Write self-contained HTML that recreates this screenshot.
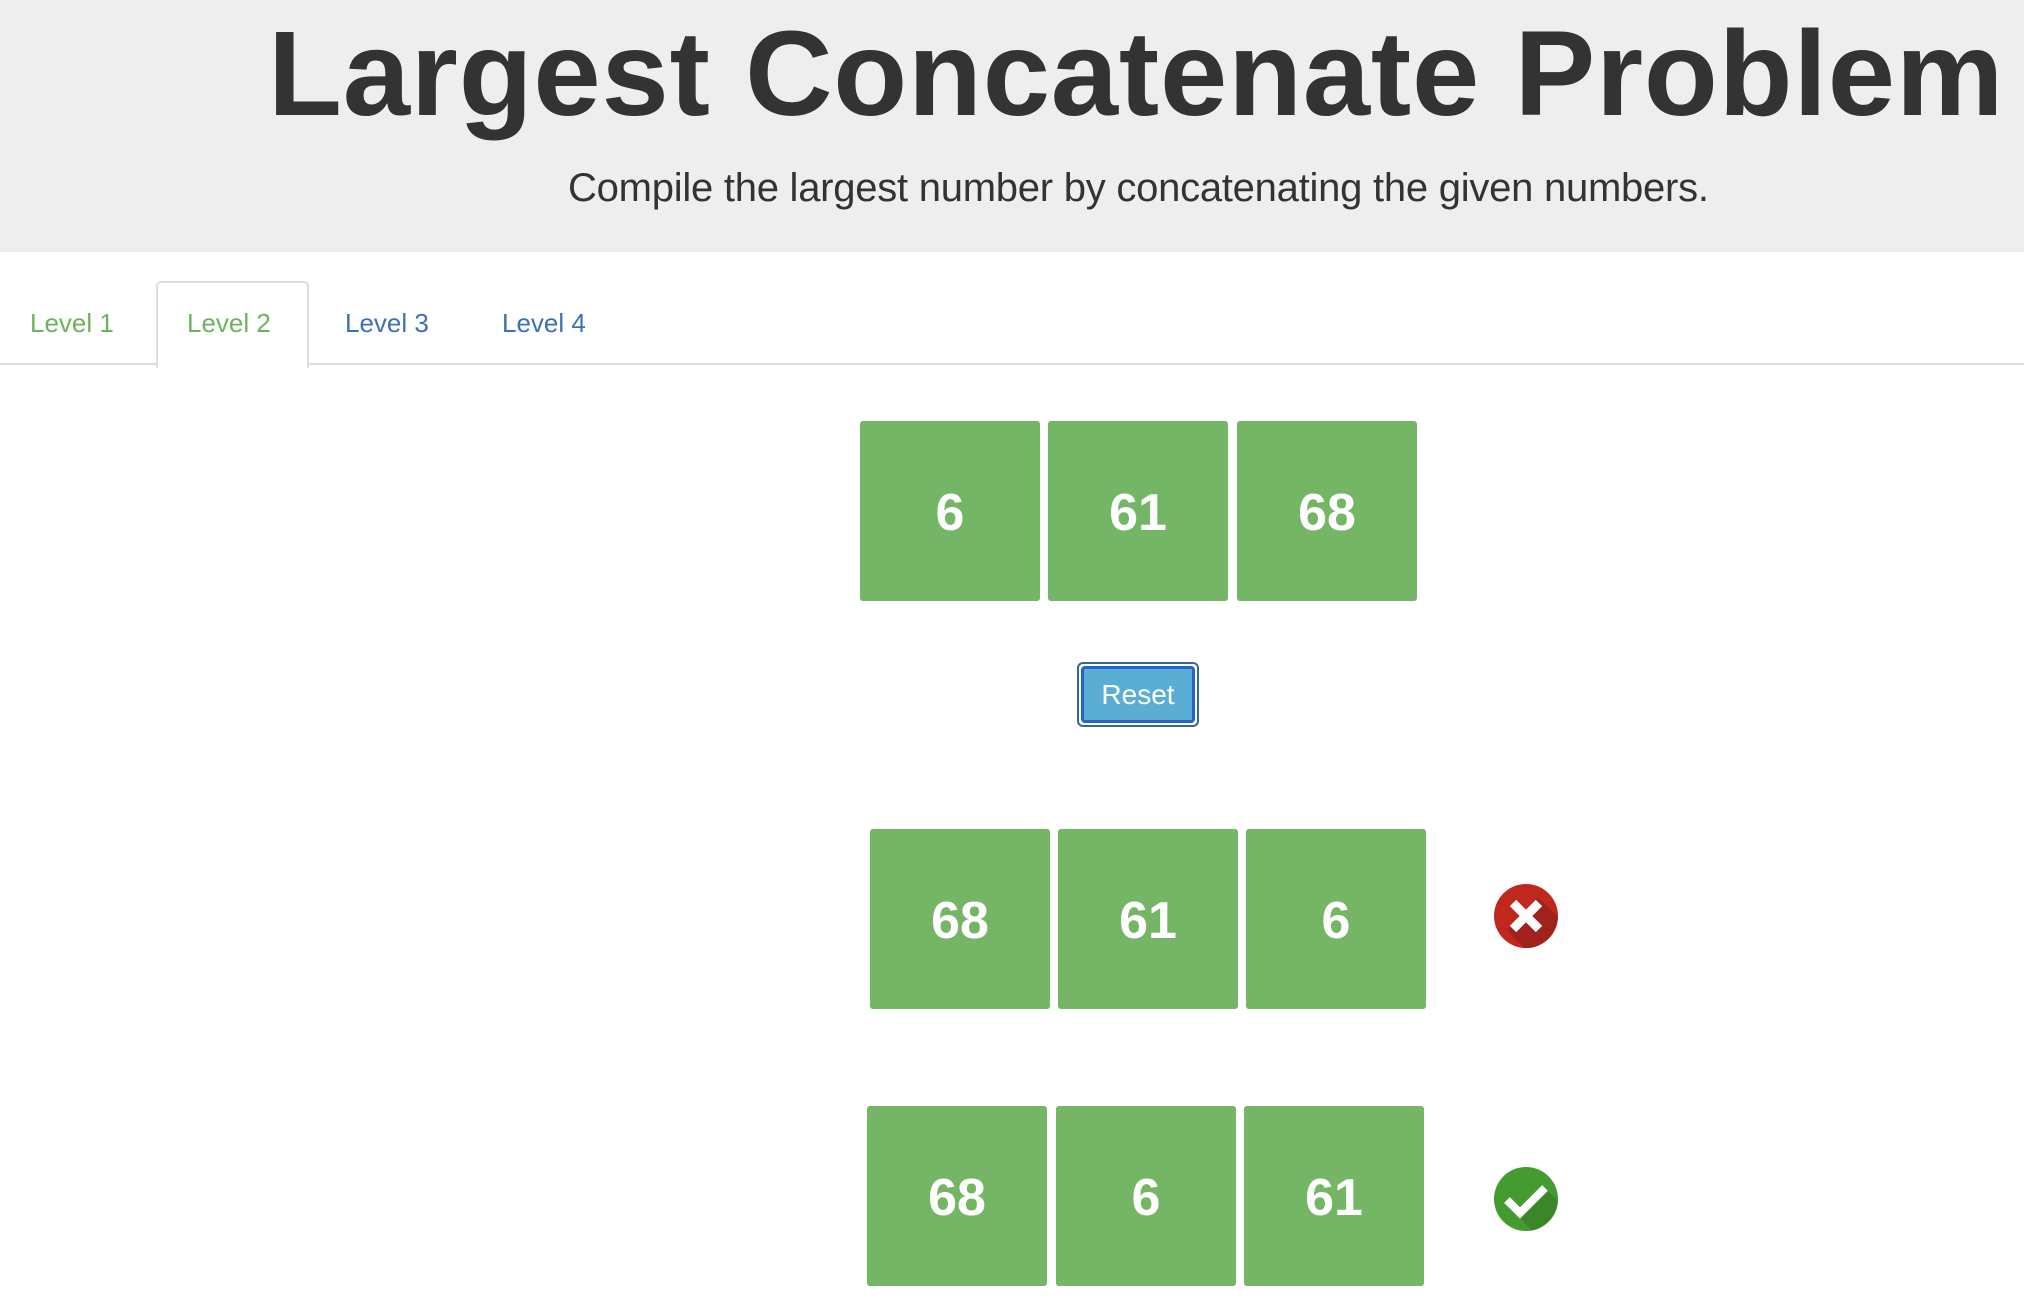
<!DOCTYPE html>
<html><head><meta charset="utf-8"><style>
body{margin:0;width:2024px;height:1314px;background:#fff;font-family:"Liberation Sans",Arial,sans-serif;position:relative;overflow:hidden}
.hdr{position:absolute;left:0;top:0;width:2024px;height:252px;background:#eeeeee}
.t{position:absolute;left:268px;top:-2px;font-size:121px;font-weight:bold;color:#333;white-space:nowrap;letter-spacing:0.8px;line-height:150px}
.s{position:absolute;left:568px;top:164px;font-size:40px;color:#333;white-space:nowrap;line-height:48px;letter-spacing:-0.25px}
.tabline{position:absolute;left:0;top:363px;width:2024px;height:2px;background:#ddd}
.atab{position:absolute;left:156px;top:281px;width:149px;height:84px;border:2px solid #ddd;border-bottom:2px solid #fff;border-radius:5px 5px 0 0;background:#fff}
.tab{position:absolute;top:306px;font-size:26px;line-height:34px}
.tile{position:absolute;width:180px;height:180px;background:#74b666;border-radius:3px;color:#fff;font-weight:bold;font-size:52px;display:flex;align-items:center;justify-content:center;padding-top:4px;box-sizing:border-box}
.btn{position:absolute;left:1077px;top:662px;width:118px;height:61px;border:2px solid #2e6d8a;border-radius:6px;background:#fff}
.btn div{position:absolute;left:2px;top:2px;right:2px;bottom:2px;border:3px solid #2a5fcc;border-radius:4px;background:#5aaed3;color:#fff;font-size:28px;display:flex;align-items:center;justify-content:center}
</style></head><body>
<div class="hdr"></div>
<div class="t">Largest Concatenate Problem</div>
<div class="s">Compile the largest number by concatenating the given numbers.</div>
<div class="tabline"></div>
<div class="atab"></div>
<div class="tab" style="left:30px;color:#6db35c">Level 1</div>
<div class="tab" style="left:187px;color:#6db35c">Level 2</div>
<div class="tab" style="left:345px;color:#3d71b5">Level 3</div>
<div class="tab" style="left:502px;color:#3d71b5">Level 4</div>

<div class="tile" style="left:860px;top:421px">6</div>
<div class="tile" style="left:1048px;top:421px">61</div>
<div class="tile" style="left:1237px;top:421px">68</div>

<div class="btn"><div>Reset</div></div>

<div class="tile" style="left:870px;top:829px">68</div>
<div class="tile" style="left:1058px;top:829px">61</div>
<div class="tile" style="left:1246px;top:829px">6</div>

<div class="tile" style="left:867px;top:1106px">68</div>
<div class="tile" style="left:1056px;top:1106px">6</div>
<div class="tile" style="left:1244px;top:1106px">61</div>

<svg style="position:absolute;left:1494px;top:884px" width="64" height="64" viewBox="0 0 64 64">
<defs><clipPath id="c1"><circle cx="32" cy="32" r="32"/></clipPath></defs>
<circle cx="32" cy="32" r="32" fill="#c0281e"/>
<polygon clip-path="url(#c1)" points="44,13 64,33 64,64 30,64 13,46" fill="#a0221a"/>
<path d="M19 19 L45 45 M45 19 L19 45" stroke="#fff" stroke-width="9"/>
</svg>
<svg style="position:absolute;left:1494px;top:1167px" width="64" height="64" viewBox="0 0 64 64">
<defs><clipPath id="c2"><circle cx="32" cy="32" r="32"/></clipPath></defs>
<circle cx="32" cy="32" r="32" fill="#449b2f"/>
<polygon clip-path="url(#c2)" points="48,18 64,34 64,64 38,64 25,50" fill="#3b8628"/>
<path d="M13 33 L26 46 L51 21" stroke="#fff" stroke-width="8" fill="none"/>
</svg>
</body></html>
